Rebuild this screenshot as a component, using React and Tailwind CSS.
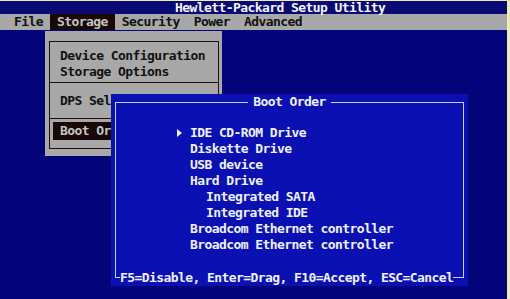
import React from 'react';

const menus = ['File', 'Storage', 'Security', 'Power', 'Advanced'];

const bootItems = [
  { label: 'IDE CD-ROM Drive', selected: true },
  { label: 'Diskette Drive' },
  { label: 'USB device' },
  { label: 'Hard Drive' },
  { label: 'Integrated SATA', indent: true },
  { label: 'Integrated IDE', indent: true },
  { label: 'Broadcom Ethernet controller' },
  { label: 'Broadcom Ethernet controller' },
];

const Arrow = () => (
  <svg width="5" height="8" viewBox="0 0 5 8" className="block">
    <path d="M0 0 L5 4 L0 8 Z" fill="#f0f0ff" />
  </svg>
);

const App = () => {
  return (
    <div className="relative w-[510px] h-[299px] overflow-hidden border-t border-r-[3px] border-[#eeeeb0] bg-[#03047a] font-['DejaVu_Sans_Mono',monospace] font-bold text-[13px] tracking-[-0.58px] whitespace-pre">
      {/* Title bar */}
      <div className="h-[13px] leading-[13px] pl-[175px] bg-[#0a0a74] text-[#f4f4ff]">
        Hewlett-Packard Setup Utility
      </div>

      {/* Menu bar */}
      <div className="h-[16px] leading-[16px] flex items-center pl-[7px] bg-[#a8a8a8] text-[#111111]">
        {menus.map(m => (
          <span
            key={m}
            className={m === 'Storage' ? 'px-[7px] bg-[#180808] text-[#c4c4c4]' : 'px-[7px]'}
          >
            {m}
          </span>
        ))}
      </div>

      {/* Storage dropdown */}
      <div className="absolute left-[45px] top-[30px] w-[177px] h-[125px] pt-[10px] pl-[4px] pr-[3px] pb-[7px] bg-[#a8a8a8] text-[#111111]">
        <div className="h-full border border-[#1c1010] flex flex-col">
          <div className="pt-[6px] pl-[10px] leading-[16px]">
            <div>Device Configuration</div>
            <div>Storage Options</div>
          </div>
          <div className="mt-[2px] h-px bg-[#1c1010]" />
          <div className="mt-[10px] pl-[10px] leading-[16px]">DPS Self-Test</div>
          <div className="mt-[9px] h-px bg-[#1c1010]" />
          <div className="mt-[3px] ml-[3px] mr-[3px] h-[18px] leading-[18px] pl-[7px] bg-[#180808] text-[#c4c4c4]">
            Boot Order
          </div>
        </div>
      </div>

      {/* Boot Order dialog */}
      <div className="absolute left-[111px] top-[93px] w-[357px] h-[192px] pt-[8px] px-[4px] bg-[#0a10b2] text-[#f0f0ff]">
        <div className="h-[176px] border border-[#c8ccf0] flex flex-col">
          <div className="-mt-[9px] h-[16px] leading-[16px] flex justify-center">
            <span className="px-[5px] bg-[#0a10b2]">Boot Order</span>
          </div>

          <div className="mt-[15px] flex flex-col">
            {bootItems.map((item, idx) => (
              <div key={idx} className="h-[16px] leading-[16px] flex items-center">
                <div className="w-[74px] flex justify-end pr-[8px]">
                  {item.selected && <Arrow />}
                </div>
                <span className={item.indent ? 'pl-[16px]' : ''}>{item.label}</span>
              </div>
            ))}
          </div>

          <div className="mt-auto -mb-[9px] h-[16px] leading-[16px] flex">
            <span className="ml-[4px] bg-[#0a10b2]">F5=Disable, Enter=Drag, F10=Accept, ESC=Cancel</span>
          </div>
        </div>
      </div>
    </div>
  );
};

export default App;
